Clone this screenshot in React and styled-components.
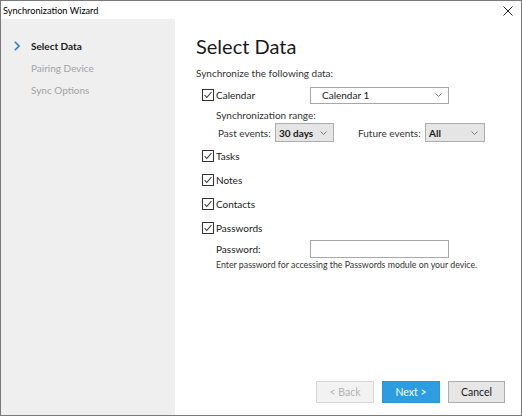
import React from "react";
import styled, { createGlobalStyle } from "styled-components";

const GlobalStyle = createGlobalStyle`
  html, body {
    margin: 0;
    padding: 0;
    background: #ffffff;
  }
  body {
    font-family: Lato, "Noto Sans", sans-serif;
    font-size: 10px;
    color: #1e1e1e;
    white-space: nowrap;
  }
`;

const Window = styled.div`
  width: 522px;
  height: 416px;
  box-sizing: border-box;
  border: 1px solid #7a7a7a;
  display: flex;
  flex-direction: column;
  background: #ffffff;
`;

const TitleBar = styled.div`
  height: 18px;
  display: flex;
  align-items: center;
  justify-content: space-between;
  padding: 0 8px 0 2px;
  font-size: 9.2px;
  color: #000;
`;

const CloseIcon = styled.svg`
  width: 10px;
  height: 10px;
  margin-top: 2px;
`;

const Body = styled.div`
  flex: 1;
  display: flex;
  min-height: 0;
`;

const Sidebar = styled.div`
  width: 174px;
  background: #efefef;
  padding-top: 18px;
  box-sizing: border-box;
  display: flex;
  flex-direction: column;
  gap: 4px;
`;

const Step = styled.div`
  height: 18px;
  display: flex;
  align-items: center;
  padding-left: 13px;
  font-weight: ${({ $active }) => ($active ? 700 : 400)};
  color: ${({ $active }) => ($active ? "#1a1a1a" : "#a3a3a3")};
`;

const StepMark = styled.span`
  width: 17px;
  display: inline-flex;
  align-items: center;
`;

const Main = styled.div`
  flex: 1;
  display: flex;
  flex-direction: column;
  padding: 13px 16px 12px 21px;
`;

const Heading = styled.h1`
  margin: 0;
  font-size: 20px;
  font-weight: 400;
  line-height: 28px;
  color: #1a1a1a;
`;

const Intro = styled.div`
  margin-top: 6px;
  line-height: 15px;
  color: #333;
`;

const Row = styled.div`
  display: flex;
  align-items: center;
  margin-left: ${({ $indent }) => $indent || 0}px;
  margin-top: ${({ $top }) => $top || 0}px;
  height: ${({ $h }) => $h || 18}px;
`;

const CheckLabel = styled.label`
  display: flex;
  align-items: center;
  gap: 2px;
  width: ${({ $w }) => ($w ? `${$w}px` : "auto")};
  color: #1a1a1a;
`;

const Box = styled.svg`
  width: 12px;
  height: 12px;
  flex: none;
`;

const Label = styled.span`
  color: ${({ $muted }) => ($muted ? "#333" : "#1a1a1a")};
  width: ${({ $w }) => ($w ? `${$w}px` : "auto")};
  margin-left: ${({ $gap }) => $gap || 0}px;
  flex: none;
`;

const Select = styled.div`
  box-sizing: border-box;
  width: ${({ $w }) => $w}px;
  height: ${({ $h }) => $h || 18}px;
  border: 1px solid ${({ $flat }) => ($flat ? "#a8a8a8" : "#acacac")};
  background: ${({ $flat }) => ($flat ? "#ffffff" : "#e5e5e5")};
  display: flex;
  align-items: center;
  justify-content: space-between;
  padding: 0 6px 0 ${({ $flat }) => ($flat ? 11 : 3)}px;
  font-weight: ${({ $flat }) => ($flat ? 400 : 700)};
  color: #1a1a1a;
`;

const Input = styled.div`
  box-sizing: border-box;
  width: 139px;
  height: 18px;
  border: 1px solid #a8a8a8;
  background: #fff;
`;

const Hint = styled.div`
  margin-left: 20px;
  font-size: 8.8px;
  line-height: 14px;
  color: #333;
`;

const Footer = styled.div`
  margin-top: auto;
  display: flex;
  justify-content: flex-end;
  gap: 8px;
`;

const Button = styled.button`
  box-sizing: border-box;
  width: ${({ $w }) => $w || 58}px;
  height: 22px;
  font-family: inherit;
  font-size: 10.5px;
  padding: 0;
  border: 1px solid
    ${({ $variant }) =>
      $variant === "primary" ? "#2b95d6" : $variant === "disabled" ? "#d6d6d6" : "#adadad"};
  background: ${({ $variant }) =>
    $variant === "primary" ? "#2d9ddf" : $variant === "disabled" ? "#f2f2f2" : "#e6e6e6"};
  color: ${({ $variant }) =>
    $variant === "primary" ? "#ffffff" : $variant === "disabled" ? "#b3b3b3" : "#1a1a1a"};
`;

const Chevron = ({ color = "#7a7a7a" }) => (
  <svg width="7" height="4" viewBox="0 0 7 4">
    <path d="M0.5 0.5 L3.5 3.5 L6.5 0.5" fill="none" stroke={color} strokeWidth="1" />
  </svg>
);

const Check = () => (
  <Box viewBox="0 0 12 12">
    <rect x="0.5" y="0.5" width="11" height="11" fill="#fff" stroke="#333" />
    <path d="M2.5 6 L4.8 8.5 L9.5 3" fill="none" stroke="#333" strokeWidth="1.1" />
  </Box>
);

const CheckItem = ({ label, top }) => (
  <Row $indent={6} $top={top}>
    <CheckLabel>
      <Check />
      {label}
    </CheckLabel>
  </Row>
);

export default function App() {
  return (
    <>
      <GlobalStyle />
      <Window>
        <TitleBar>
          <span>Synchronization Wizard</span>
          <CloseIcon viewBox="0 0 10 10">
            <path d="M0.5 0.5 L9.5 9.5 M9.5 0.5 L0.5 9.5" stroke="#222" strokeWidth="1" />
          </CloseIcon>
        </TitleBar>
        <Body>
          <Sidebar>
            <Step $active>
              <StepMark>
                <svg width="6" height="10" viewBox="0 0 6 10">
                  <path d="M0.8 0.8 L5 5 L0.8 9.2" fill="none" stroke="#2b7fd0" strokeWidth="1.6" />
                </svg>
              </StepMark>
              Select Data
            </Step>
            <Step>
              <StepMark />
              Pairing Device
            </Step>
            <Step>
              <StepMark />
              Sync Options
            </Step>
          </Sidebar>
          <Main>
            <Heading>Select Data</Heading>
            <Intro>Synchronize the following data:</Intro>
            <Row $indent={6} $top={5}>
              <CheckLabel $w={108}>
                <Check />
                Calendar
              </CheckLabel>
              <Select $flat $w={139} $h={17}>
                <span>Calendar 1</span>
                <Chevron />
              </Select>
            </Row>
            <Row $indent={20} $top={2} $h={17}>
              <Label $muted>Synchronization range:</Label>
            </Row>
            <Row $indent={22} $h={19}>
              <Label $muted $w={57}>Past events:</Label>
              <Select $w={59} $h={19}>
                <span>30 days</span>
                <Chevron />
              </Select>
              <Label $muted $gap={24} $w={67}>
                Future events:
              </Label>
              <Select $w={60} $h={19}>
                <span>All</span>
                <Chevron />
              </Select>
            </Row>
            <CheckItem label="Tasks" top={5} />
            <CheckItem label="Notes" top={6} />
            <CheckItem label="Contacts" top={6} />
            <CheckItem label="Passwords" top={6} />
            <Row $indent={20} $top={3}>
              <Label $w={94}>Password:</Label>
              <Input />
            </Row>
            <Hint>Enter password for accessing the Passwords module on your device.</Hint>
            <Footer>
              <Button $variant="disabled">&lt; Back</Button>
              <Button $variant="primary">Next &gt;</Button>
              <Button $w={57}>Cancel</Button>
            </Footer>
          </Main>
        </Body>
      </Window>
    </>
  );
}
